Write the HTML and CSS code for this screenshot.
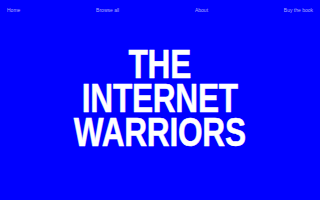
FILE: index.html
```html
<!DOCTYPE html>
<html>
<head>
<meta charset="utf-8">
<link rel="stylesheet" href="styles.css">
</head>
<body>
<nav class="nav">
  <a class="nav-link">Home</a>
  <a class="nav-link">Browse all</a>
  <a class="nav-link">About</a>
  <a class="nav-link">Buy the book</a>
</nav>
<main class="hero">
  <h1 class="title">THE<br>INTERNET<br>WARRIORS</h1>
</main>
</body>
</html>
```
FILE: styles.css
```css
html, body {
  margin: 0;
  padding: 0;
  width: 320px;
  height: 200px;
  overflow: hidden;
  background: #0000ff;
}
.nav {
  display: flex;
  justify-content: space-between;
  padding: 7px 7px 0 7px;
  height: 11px;
}
.nav-link {
  font-family: "Liberation Sans", Arial, sans-serif;
  font-size: 5px;
  line-height: 6px;
  color: rgba(255, 255, 255, 0.65);
}
.hero {
  display: flex;
  justify-content: center;
  padding-top: 29px;
}
.title {
  margin: 0;
  font-family: "Liberation Sans Narrow", "Liberation Sans", Arial, sans-serif;
  font-weight: bold;
  font-size: 40px;
  line-height: 34px;
  color: #ffffff;
  text-align: center;
  transform: scaleX(0.79);
  letter-spacing: -0.3px;
  -webkit-text-stroke: 0.5px #ffffff;
}
```
